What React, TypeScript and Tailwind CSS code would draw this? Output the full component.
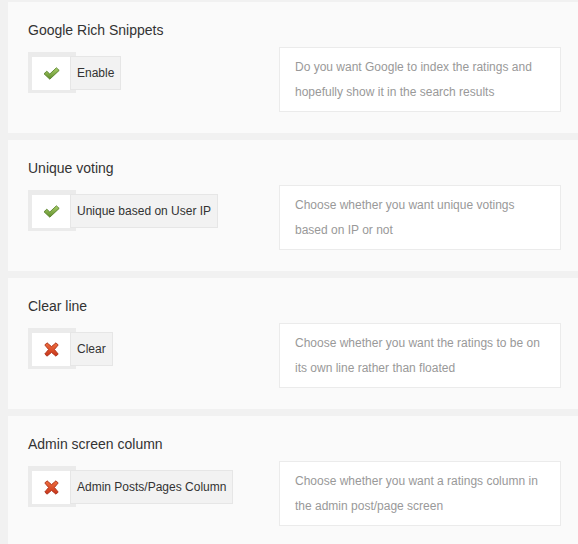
import React from 'react'

type Setting = {
  title: string
  on: boolean
  label: string
  desc: string
}

const settings: Setting[] = [
  {
    title: 'Google Rich Snippets',
    on: true,
    label: 'Enable',
    desc: 'Do you want Google to index the ratings and hopefully show it in the search results',
  },
  {
    title: 'Unique voting',
    on: true,
    label: 'Unique based on User IP',
    desc: 'Choose whether you want unique votings based on IP or not',
  },
  {
    title: 'Clear line',
    on: false,
    label: 'Clear',
    desc: 'Choose whether you want the ratings to be on its own line rather than floated',
  },
  {
    title: 'Admin screen column',
    on: false,
    label: 'Admin Posts/Pages Column',
    desc: 'Choose whether you want a ratings column in the admin post/page screen',
  },
]

function CheckIcon() {
  return (
    <svg width="17" height="13" viewBox="0 0 17 13">
      <defs>
        <linearGradient id="chk" x1="0" y1="0" x2="0" y2="1">
          <stop offset="0" stopColor="#a9cf6a" />
          <stop offset="1" stopColor="#5f8c2a" />
        </linearGradient>
      </defs>
      <path
        d="M1 6.8 L3.8 4.2 L6.8 7 L13.4 0.8 L16.2 3.4 L6.8 12.2 Z"
        fill="url(#chk)"
        stroke="#4f7a22"
        strokeWidth="0.8"
        strokeLinejoin="round"
      />
    </svg>
  )
}

function CrossIcon() {
  return (
    <svg width="15" height="15" viewBox="0 0 15 15">
      <defs>
        <linearGradient id="crs" x1="0" y1="0" x2="0" y2="1">
          <stop offset="0" stopColor="#f0703f" />
          <stop offset="1" stopColor="#c8341a" />
        </linearGradient>
      </defs>
      <path
        d="M3 0.8 L7.5 4.6 L12 0.8 L14.2 3 L10.4 7.5 L14.2 12 L12 14.2 L7.5 10.4 L3 14.2 L0.8 12 L4.6 7.5 L0.8 3 Z"
        fill="url(#crs)"
        stroke="#a9301a"
        strokeWidth="0.9"
        strokeLinejoin="round"
      />
    </svg>
  )
}

function Toggle({ on, label }: { on: boolean; label: string }) {
  return (
    <div className="flex items-start mt-[12px]">
      <div className="w-[48px] h-[41px] bg-[#ebebeb] pl-[4px] pt-[5px] shrink-0">
        <div className="w-[38px] h-[33px] bg-white flex items-center justify-center">
          {on ? <CheckIcon /> : <CrossIcon />}
        </div>
      </div>
      <div className="-ml-[6px] mt-[4px] h-[34px] pl-[6px] pr-[6px] bg-[#f2f2f2] border border-[#e6e6e6] flex items-center text-[12px] text-[#333] whitespace-nowrap">
        {label}
      </div>
    </div>
  )
}

export default function App() {
  return (
    <div className="min-h-[544px] bg-[#f1f1f1] pt-[2px] font-['Liberation_Sans',Arial,sans-serif] overflow-hidden">
      <div className="flex flex-col gap-[7px]">
        {settings.map((s) => (
          <div key={s.title} className="ml-[8px] h-[131px] bg-[#fafafa] pt-[18px] pl-5 pr-[17px] flex items-start">
            {/* Coluna esquerda */}
            <div className="flex-1">
              <h3 className="text-[14px] leading-[20px] text-[#333]">{s.title}</h3>
              <Toggle on={s.on} label={s.label} />
            </div>
            {/* Descrição */}
            <div className="w-[282px] mt-[27px] bg-white border border-[#ebebeb] pl-[15px] pr-[15px] pt-[7px] pb-[6px] text-[12px] leading-[25px] text-[#999]">
              {s.desc}
            </div>
          </div>
        ))}
      </div>
    </div>
  )
}
